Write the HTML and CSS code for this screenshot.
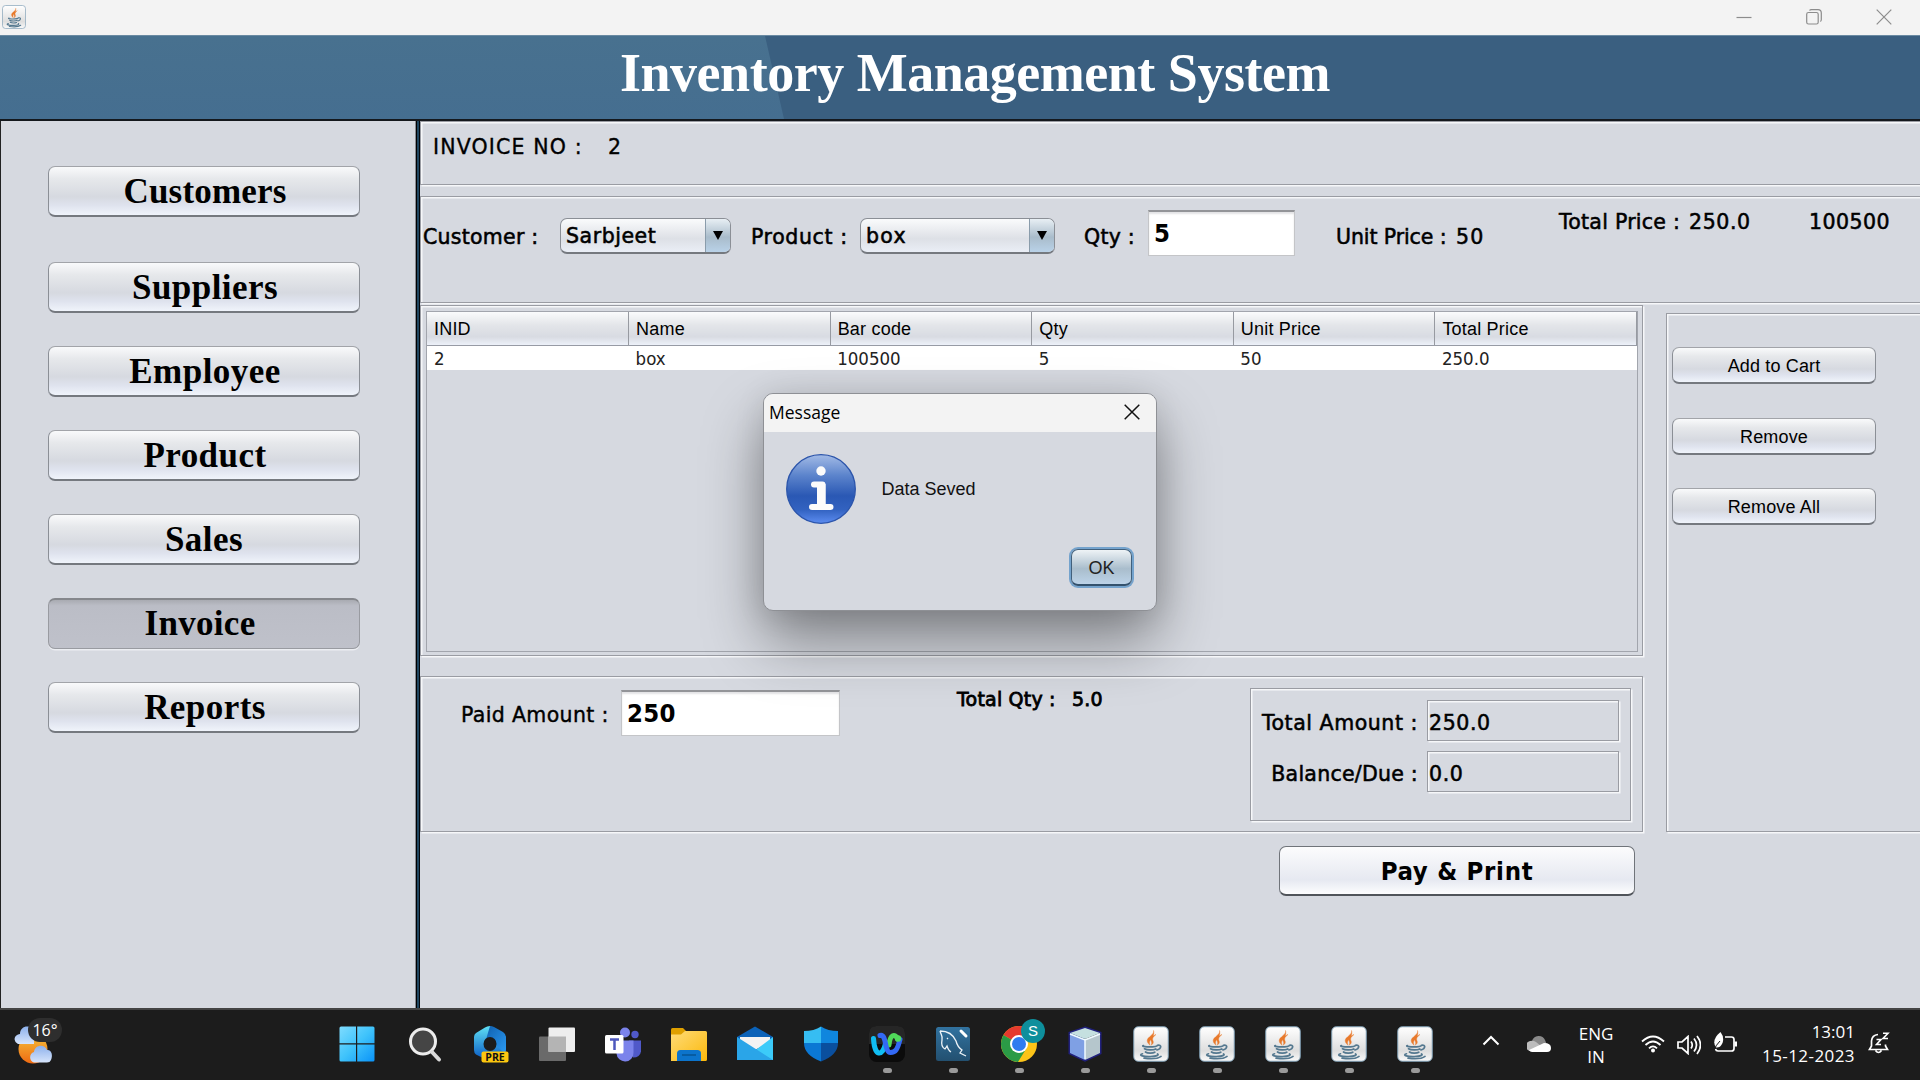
FILE: index.html
```html
<!DOCTYPE html>
<html lang="en">
<head>
<meta charset="utf-8">
<title>Inventory Management System</title>
<link rel="stylesheet" href="styles.css">
</head>
<body>
<svg class="defs" aria-hidden="true">
  <defs>
    <linearGradient id="gTile" x1="0" y1="0" x2="0" y2="1"><stop offset="0" stop-color="#fff"/><stop offset=".7" stop-color="#dedede"/><stop offset="1" stop-color="#fafafa"/></linearGradient>
    <linearGradient id="gWin" x1="0" y1="0" x2="1" y2="1"><stop offset="0" stop-color="#7fdcff"/><stop offset=".5" stop-color="#3fc3fb"/><stop offset="1" stop-color="#0a93f8"/></linearGradient>
    <linearGradient id="gInfo" x1="0" y1="0" x2="0" y2="1"><stop offset="0" stop-color="#a3bbe6"/><stop offset=".3" stop-color="#5c84cc"/><stop offset=".6" stop-color="#2a58b4"/><stop offset=".8" stop-color="#3262c0"/><stop offset="1" stop-color="#5c8cf0"/></linearGradient>
    <linearGradient id="gPre" x1="0" y1="0" x2="0" y2="1"><stop offset="0" stop-color="#5fe0f5"/><stop offset="1" stop-color="#0b5cc4"/></linearGradient>
    <linearGradient id="gPre2" x1="0" y1="0" x2="1" y2="1"><stop offset="0" stop-color="#0f5fae"/><stop offset="1" stop-color="#2b9bf4"/></linearGradient>
    <linearGradient id="gFold" x1="0" y1="0" x2="1" y2="1"><stop offset="0" stop-color="#ffdc78"/><stop offset="1" stop-color="#fbb80b"/></linearGradient>
    <linearGradient id="gSun" x1="0" y1="0" x2="0" y2="1"><stop offset="0" stop-color="#f6c03a"/><stop offset="1" stop-color="#ee6a12"/></linearGradient>
    <linearGradient id="gCloud" x1="0" y1="0" x2="0" y2="1"><stop offset="0" stop-color="#8db1ec"/><stop offset="1" stop-color="#d6e4fb"/></linearGradient>
    <linearGradient id="gSea" x1="0" y1="0" x2="0" y2="1"><stop offset="0" stop-color="#31729f"/><stop offset="1" stop-color="#235070"/></linearGradient>
    <symbol id="java" viewBox="0 0 36 36">
      <rect x=".75" y=".75" width="34.500" height="34.500" rx="4.500" fill="url(#gTile)" stroke="#7f9fb5"/>
      <path d="M20.500 4.500c1.500 4-6.500 6.500-6.300 10.200 0 2 1.800 3.300 2.800 4.600-.5-1.800-1-3 .4-5 1.600-2.300 4.300-5 3.100-9.800zM23 8.500c-3 1.200-5.600 3.300-5 6 .3 1.300 1.200 2 .3 4.600 2-1.200 2.600-2.800 1.500-4.800-.9-1.600.5-3.800 3.200-5.800z" fill="#e8792b" stroke="#e8792b" stroke-width=".4"/>
      <path d="M10.500 19.500c-3 1 4 1.800 9 1.300 2.500-.2 4-.6 4.500-1M11.500 22.800c2.500 1.600 9 1.400 11.300.2M12.500 26c2 1.400 7.500 1.300 9.300.2M24.500 19.300c4.500-1 4.200 3.300-.5 4.700M9.500 27.800c-5 1.500 1.500 3 8 2.800 6-.2 9-1.500 7-2.700M11 32.200c6 .8 14 .5 17-1.800" fill="none" stroke="#54788f" stroke-width="1.700" stroke-linecap="round"/>
    </symbol>
  </defs>
</svg>

<header class="titlebar">
  <svg class="app-icon" viewBox="0 0 36 36" preserveAspectRatio="none"><use href="#java"/></svg>
  <div class="win-controls">
    <svg width="16" height="16" viewBox="0 0 16 16"><path d="M.5 8.500h15"/></svg>
    <svg width="16" height="16" viewBox="0 0 16 16"><rect x=".7" y="3.500" width="11.500" height="11.500" rx="1.800"/><path d="M3.500 1.500Q4 .7 5.500.7H12q3.300 0 3.300 3.300v6.500q0 1.500-1 2"/></svg>
    <svg width="16" height="16" viewBox="0 0 16 16"><path d="M.7.7l14.600 14.600M15.300.7L.7 15.300"/></svg>
  </div>
</header>

<div class="banner"><h1>Inventory Management System</h1></div>

<main class="shell">
  <nav class="sidebar">
    <button class="btn nav first">Customers</button>
    <button class="btn nav">Suppliers</button>
    <button class="btn nav">Employee</button>
    <button class="btn nav">Product</button>
    <button class="btn nav sales">Sales</button>
    <button class="btn nav active">Invoice</button>
    <button class="btn nav">Reports</button>
  </nav>

  <section class="workspace">
    <div class="panel invoice-no"><span class="lab l-invoice">INVOICE NO :</span><span class="lab">2</span></div>

    <div class="panel entry">
      <span class="lab l-customer">Customer :</span>
      <div class="combo"><span class="lab l-name">Sarbjeet</span><i><svg width="10" height="9" viewBox="0 0 10 9"><path d="M0 0h10L5 9z"/></svg></i></div>
      <span class="lab l-product">Product :</span>
      <div class="combo wide"><span class="lab l-box">box</span><i><svg width="10" height="9" viewBox="0 0 10 9"><path d="M0 0h10L5 9z"/></svg></i></div>
      <span class="lab l-customer">Qty :</span>
      <div class="field"><span class="big">5</span></div>
      <span class="lab l-unit">Unit Price :</span>
      <span class="lab l-fifty">50</span>
      <span class="lab up l-customer">Total Price :</span>
      <span class="lab up l-num">250.0</span>
      <span class="lab up l-code">100500</span>
    </div>

    <div class="lower">
      <div class="left-col">
        <div class="panel cart">
          <div class="scroll">
            <table>
              <thead><tr><th>INID</th><th>Name</th><th>Bar code</th><th>Qty</th><th>Unit Price</th><th>Total Price</th></tr></thead>
              <tbody><tr><td>2</td><td>box</td><td>100500</td><td>5</td><td>50</td><td>250.0</td></tr></tbody>
            </table>
          </div>
        </div>
        <div class="panel payment">
          <span class="lab paid">Paid Amount :</span>
          <div class="field"><span class="big">250</span></div>
          <span class="lab qty">Total Qty :</span>
          <span class="lab qty">5.0</span>
          <div class="panel totals">
            <span class="lab l-total">Total Amount :</span><div class="panel out"><span class="lab l-num">250.0</span></div>
            <span class="lab l-customer">Balance/Due :</span><div class="panel out"><span class="lab l-num">0.0</span></div>
          </div>
        </div>
        <button class="btn pay">Pay &amp; Print</button>
      </div>
      <aside class="panel actions">
        <button class="btn act">Add to Cart</button>
        <button class="btn act">Remove</button>
        <button class="btn act">Remove All</button>
      </aside>
    </div>
  </section>
</main>

<div class="dialog" role="dialog">
  <div class="dialog-title"><span>Message</span><svg width="16" height="16" viewBox="0 0 16 16"><path d="M.7.7l14.600 14.600M15.300.7L.7 15.300"/></svg></div>
  <div class="dialog-body">
    <svg width="70" height="70" viewBox="0 0 70 70"><circle cx="35" cy="35" r="34.300" fill="url(#gInfo)" stroke="#2c55ab" stroke-width="1.300"/><circle cx="35" cy="17" r="4.700" fill="#fbfbfb"/><path d="M28 30.500h8.500V53M26 53h18.500" fill="none" stroke="#fbfbfb" stroke-width="6" stroke-linecap="round" stroke-linejoin="round"/><path d="M31 30h8.500v22H31z" fill="#fbfbfb"/></svg>
    <span>Data Seved</span>
  </div>
  <button class="btn ok">OK</button>
</div>

<footer class="taskbar">
  <div class="weather">
    <svg width="48" height="46" viewBox="0 0 48 46"><circle cx="19" cy="25" r="14.500" fill="url(#gSun)"/><path d="M4 20a5 5 0 0 1-1-9q2-1 3-1c0-10 14-10 14 0v10z" fill="url(#gCloud)"/><path d="M20 38.500a5.500 5.500 0 0 1 0-10.500c1-8 11-8 13-2 5-.5 6 6 4 10q-1 2.500-4 2.500z" fill="url(#gCloud)"/></svg>
    <span class="temp">16°</span>
  </div>
  <div class="apps">
    <svg class="start" viewBox="0 0 36 36"><path fill="url(#gWin)" d="M2 .5h15v16.800H.5V2Q.5.500 2 .5zM18.200.5h15.800Q35.500.5 35.500 2v15.300H18.200zM.5 18.500H17V35.500H2Q.5 35.500.5 34zM18.200 18.500h17.300V34q0 1.500-1.500 1.500H18.200z"/></svg>
    <svg viewBox="0 0 36 36"><circle cx="16" cy="15.500" r="12.500" fill="#454545" stroke="#ededed" stroke-width="3"/><path d="M25 26l7 7.500" stroke="#d9d9d9" stroke-width="4" stroke-linecap="round"/></svg>
    <svg viewBox="0 0 36 36"><path d="M17 0q-3 0-5 1.500L3 7Q1 8.500 1 11v13q0 3 2 4.500l9 4.500h12l6-4q3-2 3-5V11z" fill="url(#gPre)"/><path d="M17 0q2 0 4 1l9 5q3 2 3 5v12q0 3-2 4L22 18q-3-6-9-4.500L17 0z" fill="url(#gPre2)"/><ellipse cx="17" cy="18" rx="6.500" ry="7" fill="#1c1c1c"/><rect x="8.500" y="25.500" width="27" height="11" rx="2" fill="#fcc70f"/><text x="22" y="34.800" text-anchor="middle" class="pre">PRE</text></svg>
    <svg viewBox="0 0 36 36"><rect y="10.500" width="27" height="24.500" rx="1" fill="#6a6a6a"/><rect x="9.500" y="1.500" width="26.500" height="24.500" rx="1" fill="#eee"/><path d="M9.500 10.500H27V26H9.500z" fill="#b4b4b4"/></svg>
    <svg viewBox="0 0 36 36"><circle cx="20" cy="6.500" r="5" fill="#7b83eb"/><circle cx="30" cy="8.500" r="3.700" fill="#5059c9"/><path d="M24 14.500h12v11q-1 6-8 6z" fill="#5059c9"/><path d="M12 14.500h16.500v12a8.500 8.500 0 0 1-17 1z" fill="#7b83eb"/><rect y="9" width="18.500" height="18.500" rx="1.500" fill="#fff"/><path d="M5 13.500h9M9.500 13.500V24" stroke="#4e58bd" stroke-width="2.500"/></svg>
    <svg viewBox="0 0 36 36"><path d="M0 3.500q0-1.500 1.500-1.500H12l4 4v6H0z" fill="#dfa000"/><path d="M0 8.500h10l4-3.500h20.500q1.500 0 1.500 1.500v27q0 1.500-1.500 1.500H0z" fill="url(#gFold)"/><path d="M6 35v-7.500Q6 24 9.500 24h17q3.500 0 3.500 3.500V35z" fill="#0c74cc"/><path d="M11 29h14" stroke="#075a9e" stroke-width="1.800"/></svg>
    <svg viewBox="0 0 36 36"><path d="M0 11L18 .5 36 11v8H0z" fill="#0b62b8"/><path d="M3 11h30v5L18 24 3 16z" fill="#f3f3f3"/><path d="M36 11v23H5z" fill="#3ccbf9"/><path d="M0 11l36 23H0z" fill="#2aa5e8"/></svg>
    <svg viewBox="0 0 36 36"><path d="M18 .5V17H1V5q10 0 17-4.500z" fill="#36bdf2"/><path d="M18 .5V17h17V5Q25 5 18 .5z" fill="#0f86de"/><path d="M1 17h17v18.500Q1 29 1 17z" fill="#0b78d4"/><path d="M35 17H18v18.500Q35 29 35 17z" fill="#0a4f9e"/></svg>
    <svg viewBox="0 0 36 36"><rect width="36" height="36" rx="7.500" fill="#0b0b0b"/><path d="M0 18V7.500Q0 0 7.500 0h21Q36 0 36 7.500V18z" fill="#262626"/><path d="M20 19c1-11 6-12 9-5.500" fill="none" stroke="#50d95a" stroke-width="5" stroke-linecap="round"/><path d="M4.500 12.500c1 18.500 9 18.500 12 5" fill="none" stroke="#10bdf2" stroke-width="5" stroke-linecap="round"/><path d="M11 9.500c7-2 4 17 10.500 17 5 0 7-3 9.500-13" fill="none" stroke="#3369f5" stroke-width="5" stroke-linecap="round"/><circle cx="29" cy="12.500" r="3.200" fill="#50d95a"/></svg>
    <svg viewBox="0 0 36 36"><rect x="1" y="1" width="34" height="34" rx="2.500" fill="url(#gSea)"/><path d="M5 5c7 0 13 3 16 10 1 4 3 7 6 9l-2 3 6 3M5 5c1 4 3 5 2 9-1 5 1 8 3 9l2-3c1 3 2 5 4 6M12 12l1 1" fill="none" stroke="#edf3f7" stroke-width="1.300"/><path d="M26 5l5 5" stroke="#fff" stroke-width="3" stroke-linecap="round"/></svg>
    <svg viewBox="0 0 36 36"><circle cx="18" cy="18" r="18" fill="#fcc419"/><path d="M18 18L2.400 9A18 18 0 0 1 33.600 9z" fill="#e53a2e"/><path d="M18 18L2.400 9A18 18 0 0 0 17 36l8-13z" fill="#2b9b46"/><circle cx="18" cy="18" r="9" fill="#fff"/><circle cx="18" cy="18" r="7" fill="#2f7cf0"/></svg>
    <svg viewBox="0 0 36 36"><path d="M18 2l15 5v20L18 34 3 27V7z" fill="none" stroke="#20207c" stroke-width="3"/><path d="M3 7l15-5 15 5-15 6z" fill="#c5e0e0"/><path d="M3 7l15 6v21L3 27z" fill="#7fa0e4"/><path d="M33 7l-15 6v21l15-7z" fill="#b5c6cc"/><path d="M3 8l15 6 15-6M18 13v20" fill="none" stroke="#f0faff" stroke-width="1.500"/></svg>
    <svg><use href="#java"/></svg><svg><use href="#java"/></svg><svg><use href="#java"/></svg><svg><use href="#java"/></svg><svg><use href="#java"/></svg>
    <b class="dot d9"></b><b class="dot"></b><b class="dot"></b><b class="dot"></b><b class="dot"></b><b class="dot"></b><b class="dot"></b><b class="dot"></b><b class="dot"></b>
    <span class="profile">S</span>
  </div>
  <div class="tray">
    <svg width="18" height="12" viewBox="0 0 18 12"><path d="M1.500 9.500L9 2l7.500 7.500" fill="none" stroke="#fff" stroke-width="2"/></svg>
    <svg width="24" height="18" viewBox="0 0 24 18"><path d="M5 6a7 7 0 0 1 13-1l2 5H6z" fill="#8a8a8a"/><path d="M5 16a5 5 0 0 1-2-10q3-1 6 1l10 8z" fill="#bcbcbc"/><path d="M2 15l15-7q7 0 7 5 0 4-4 4H5q-2 0-3-2z" fill="#fff"/></svg>
    <div class="lang"><span>ENG</span><span>IN</span></div>
    <svg width="24" height="18" viewBox="0 0 24 18"><g fill="none" stroke="#fff" stroke-width="1.800"><path d="M1 6.500q11-10 22 0M4.500 10q7.500-7 15 0M8 13.300q4-4 8 0"/></g><circle cx="12" cy="15.500" r="2" fill="#fff"/></svg>
    <svg width="24" height="20" viewBox="0 0 24 20"><path d="M1 7h4l6-5.500v17L5 13H1zM14 6.500q2.500 3.500 0 7M17 3.500q5 6.500 0 13M20 1q7 9 0 18" fill="none" stroke="#fff" stroke-width="1.700"/></svg>
    <svg class="battery" width="25" height="22" viewBox="0 0 25 22"><path d="M12 5h6.500q2.500 0 2.500 2.500v9q0 2.500-2.500 2.500H5q-2 0-2.500-2" fill="none" stroke="#fff" stroke-width="1.700"/><path d="M21.500 9.500h2.500v5h-2.500z" fill="#fff"/><path d="M7.500 0q4.500 6 1.500 12-2 4-6 3.500Q-2 8 7.500 0z" fill="#fff"/><path d="M1 18q2-5 6-9" stroke="#1c1c1c" stroke-width="1" fill="none"/></svg>
    <div class="clock"><span>13:01</span><span class="date">15-12-2023</span></div>
    <svg class="bell" width="22" height="22" viewBox="0 0 22 22"><path d="M10 2.500Q4 3 3.500 9v5L1.500 17.500h18L17.500 14v-1.500M7.500 18.500q3 4 6 0" fill="none" stroke="#fff" stroke-width="1.700"/><path d="M8.500 7.500h4.500l-4.500 5h4.500M15 1.200h5l-5 5.300h5" fill="none" stroke="#fff" stroke-width="1.600"/></svg>
  </div>
</footer>
</body>
</html>
```
FILE: styles.css
```css
* { box-sizing: border-box; }
body { margin: 0; width: 1920px; height: 1080px; overflow: hidden; display: grid; grid-template-rows: 35px 84px 889px 72px; background: #d6d9e0; color: #000; font-family: "Liberation Sans", Arial, sans-serif; }
span, button, th, td, h1 { white-space: nowrap; }
.defs { position: absolute; width: 0; height: 0; }

/* Window chrome */
.titlebar { background: #f3f3f3; display: flex; justify-content: space-between; }
.app-icon { width: 24px; height: 24px; margin: 5px 0 0 2px; }
.win-controls { display: flex; gap: 54px; padding: 8.500px 28.500px 0 0; }
.win-controls svg { fill: none; stroke: #8c8c8c; stroke-width: 1.2; }

.banner { background: #3a5f80; position: relative; border-top: 1px solid #6a8aa2; }
.banner::before { content: ""; position: absolute; inset: 0; background: linear-gradient(#48718f, #456e90); clip-path: polygon(0 0, 765px 0, 784px 100%, 0 100%); }
h1 { position: relative; margin: 0; padding: 4px 0 0 620px; font: bold 54px/66px "Liberation Serif", "Times New Roman", serif; letter-spacing: -.48px; color: #fff; }

/* Sidebar */
.shell { display: grid; grid-template-columns: 420px 1500px; border-top: 2px solid #14181d; overflow: hidden; }
.sidebar { margin-right: 4px; border-left: 1px solid #222; box-shadow: inset -1px 0 #888b92, 1px 0 #000, 3px 0 #1f4660, 4px 0 #04080c; padding: 45px 0 0 47px; display: flex; flex-direction: column; gap: 33px; }
.btn { display: flex; align-items: center; justify-content: center; padding: 0; margin: 0; color: #000; border: 1px solid #8b8f96; border-top-color: #a2a4a9; border-bottom: 2px solid #75797f; border-radius: 7px; background: linear-gradient(#f9fafb 0, #e6e8eb 25%, #d6d9e0 62%, #dfe3ee 80%, #f0f4fb 100%); font-family: inherit; }
.nav { width: 312px; height: 51px; font: bold 35px/46px "Liberation Serif", "Times New Roman", serif; letter-spacing: .45px; padding: 2px 0 0 2px; }
.nav.first { margin-bottom: 12px; letter-spacing: .18px; }
.nav.sales { padding-left: 0; }
.nav.active { background: linear-gradient(#a9abb2 0, #bbbdc6 12%, #bfc1ca 100%); border: 1px solid #999ba1; border-top: 2px solid #85878c; box-shadow: 0 1.5px #eceef2; padding: 0 8px 0 0; letter-spacing: .3px; }

/* Etched panels */
.panel { border: 1px solid #9a9ca3; box-shadow: inset 1.500px 1.500px #f6f7f9, 1.500px 1.500px #f6f7f9; }
.workspace { overflow: hidden; }
.lab { font: 20.500px/28px "DejaVu Sans", "Noto Sans", sans-serif; -webkit-text-stroke: .55px #000; justify-self: start; }
.l-invoice { letter-spacing: 1.150px; }
.l-customer { letter-spacing: .25px; }
.l-name { letter-spacing: .55px; }
.l-product { letter-spacing: .6px; }
.l-box { letter-spacing: 1.300px; }
.l-unit { letter-spacing: -.1px; }
.l-fifty { letter-spacing: 1.200px; }
.l-num { letter-spacing: .6px; }
.l-code { letter-spacing: .45px; }
.l-total { letter-spacing: .55px; }

.invoice-no { height: 64px; width: 1510px; display: grid; grid-template-columns: 175px 40px; padding: 11px 0 0 12px; }
.invoice-no .lab { -webkit-text-stroke-width: .35px; }
.entry { height: 107px; width: 1510px; margin-top: 11px; display: grid; grid-template-columns: 137px 191px 109px 224px 64px 188px 120px 103px 130px 120px 90px; padding: 0 0 0 2px; align-items: start; }
.entry .lab { margin-top: 26px; }
.entry .lab.up { margin-top: 11px; }
.entry .combo .lab { margin: 0; }
.combo { margin-top: 21px; width: 171px; height: 36px; display: flex; justify-content: space-between; align-items: stretch; padding-left: 5px; border: 1px solid #8b8f96; border-bottom: 2px solid #75797f; border-radius: 7px; background: linear-gradient(#fafbfc, #dde0e6 60%, #eaeef6); overflow: hidden; }
.combo .lab { line-height: 35px; }
.combo.wide { width: 195px; }
.combo i { width: 25px; display: grid; place-items: center; border-left: 1px solid #8a9cab; background: linear-gradient(#e8eff4, #a9bccb 55%, #b9d2e8); }
.field { height: 46px; background: #fff; border: 1px solid #c4c5c8; border-top: 2px solid #939498; box-shadow: inset 0 2px 2px #e3e3e5; padding-left: 5px; }
.entry .field { width: 147px; margin-top: 13px; }
.big { font: bold 25.500px/43px "DejaVu Sans Condensed", "Noto Sans", sans-serif; letter-spacing: .3px; }

/* Cart table */
.lower { display: grid; grid-template-columns: 1223px 300px; column-gap: 23px; margin-top: 2px; }
.cart { height: 351px; padding: 5px 4px 3px 5px; }
.scroll { border: 1.500px solid #a2a5ad; height: 341px; }
table { border-collapse: collapse; table-layout: fixed; width: 100%; font-size: 18px; }
th { text-align: left; font-weight: normal; letter-spacing: .2px; height: 33px; padding: 2px 0 0 7px; background: linear-gradient(#fafbfc, #e3e5e9 40%, #d8dbe2 75%, #edf1f9); border-right: 1px solid #979aa1; border-bottom: 1.500px solid #979ba5; line-height: 29px; }
td { background: #fff; height: 24px; padding: 1px 0 0 7px; font: 18.500px/23px "DejaVu Sans Condensed", "Noto Sans", sans-serif; color: #222; }

/* Payment */
.payment { height: 156px; margin-top: 20px; display: grid; grid-template-columns: 160px 336px 115px 178px 381px; padding-left: 40px; align-items: start; }
.paid { margin-top: 24px; letter-spacing: .35px; -webkit-text-stroke-width: .4px; }
.payment > .field { width: 219px; margin-top: 13px; }
.qty { font-size: 19px; letter-spacing: .2px; -webkit-text-stroke-width: .8px; margin-top: 8px; }
.totals { height: 133px; margin-top: 11px; display: grid; grid-template-columns: 165px 192px; grid-template-rows: 41px 41px; row-gap: 10px; padding: 11px 0 0 11px; }
.totals > .lab { margin-top: 9px; justify-self: end; padding-right: 9px; }
.out { padding: 8px 0 0 1px; }
.out .lab { display: block; }
.pay { width: 356px; height: 50px; margin: 14px 0 0 859px; font: bold 25.500px/46px "DejaVu Sans Condensed", "Noto Sans", sans-serif; letter-spacing: .7px; background: linear-gradient(#fcfcfd, #eceef4 50%, #e6e9f1 70%, #fdfdfe); border-color: #70747a; border-bottom-color: #50545a; }
.actions { margin-top: 8px; height: 519px; padding: 33px 0 0 5px; display: flex; flex-direction: column; gap: 33.500px; }
.act { width: 204px; height: 37px; flex: none; font-size: 18px; letter-spacing: .15px; padding-top: 3px; }

/* Message dialog */
.dialog { position: absolute; left: 763px; top: 393px; width: 394px; height: 218px; border: 1.500px solid #8e9095; border-radius: 10px; background: #d6d9e0; overflow: hidden; box-shadow: 0 30px 60px rgba(0,0,0,.4), 0 2px 30px rgba(0,0,0,.1); display: flex; flex-direction: column; }
.dialog-title { height: 38px; flex: none; background: #f3f3f3; display: flex; justify-content: space-between; align-items: flex-start; padding: 10px 16px 0 5px; font: 17.500px/17px "Open Sans", "Noto Sans", sans-serif; }
.dialog-title svg { fill: none; stroke: #111; stroke-width: 1.500; }
.dialog-body { display: flex; gap: 25.500px; padding: 22px 0 0 22px; font-size: 18px; line-height: 71px; height: 92px; color: #111; }
.ok { width: 61px; height: 37px; flex: none; margin: 25px 0 0 307px; padding-top: 3px; font-size: 18px; border: 1.500px solid #41607c; border-bottom: 2px solid #34526d; background: linear-gradient(#eef3f6, #a9bdcc 55%, #bcd3e8); box-shadow: 0 0 0 2px #74a3cd; color: #222; }

/* Taskbar */
.taskbar { background: #1c1c1c; border-top: 2px solid #444; display: grid; grid-template-columns: 341px 1141px 438px; color: #fff; font-family: "Open Sans", "Noto Sans", sans-serif; }
.weather { position: relative; padding: 14px 0 0 14px; }
.temp { position: absolute; left: 28px; top: 8px; width: 34px; height: 24px; border-radius: 12px; background: #2e2e2e; font: 16px/24px "Open Sans", sans-serif; text-align: center; }
.apps { position: relative; display: grid; grid-template-columns: repeat(17, 36px); grid-template-rows: 36px 5px; column-gap: 30px; row-gap: 6px; padding-top: 16px; align-content: start; }
.apps svg { width: 36px; height: 36px; overflow: visible; }
.apps .start { margin-left: -2px; }
.pre { font: bold 10.500px "Open Sans", sans-serif; fill: #111; }
.dot { width: 9px; height: 5px; border-radius: 3px; background: #9a9a9a; justify-self: center; }
.d9 { grid-column: 9; }
.profile { position: absolute; left: 680px; top: 9px; width: 24px; height: 24px; border-radius: 50%; background: #0e8f9c; text-align: center; font: 15px/24px "Liberation Sans", sans-serif; }
.tray { display: grid; grid-template-columns: 45px 50px 64px 36px 36px 40px 115px 30px; padding-top: 16px; align-items: start; font-size: 17px; line-height: 23px; }
.tray > svg { margin-top: 9px; }
.tray > .battery { margin-top: 6px; }
.tray > .bell { margin-top: 6px; }
.lang { display: flex; flex-direction: column; align-items: center; width: 38px; margin-top: -4px; }
.clock { display: flex; flex-direction: column; align-items: flex-end; width: 102px; margin-top: -6px; }
.clock .date { letter-spacing: .43px; margin-top: 1px; }
```
